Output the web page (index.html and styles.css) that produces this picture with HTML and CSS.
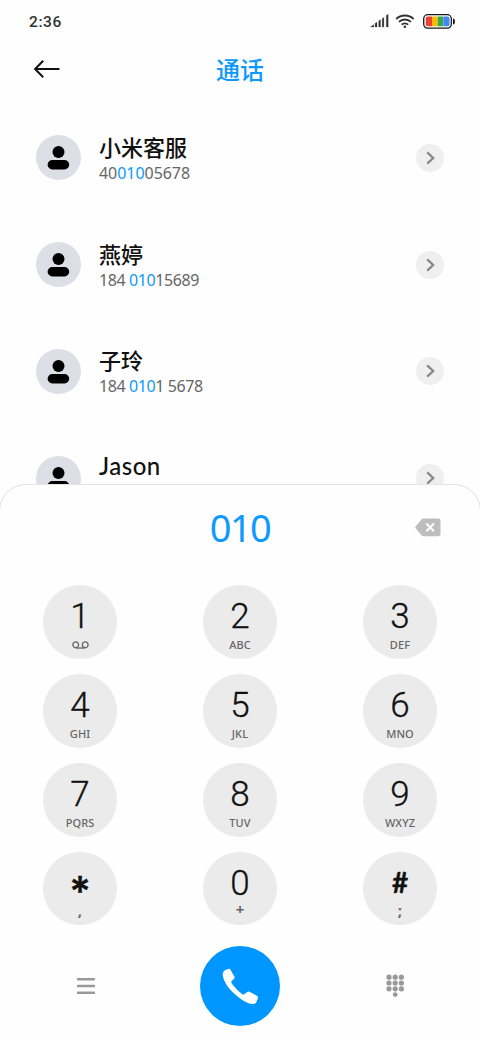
FILE: index.html
```html
<!DOCTYPE html>
<html lang="zh-CN">
<head>
<meta charset="utf-8">
<title>通话</title>
<link rel="stylesheet" href="styles.css">
</head>
<body>
<svg width="0" height="0" class="defs">
  <symbol id="person" viewBox="0 0 45 45"><circle cx="22.5" cy="17.1" r="6"/><rect x="11.6" y="25" width="21.6" height="9.4" rx="4.7"/></symbol>
  <symbol id="chevron" viewBox="0 0 28 28"><path d="M11.2 8.3 17.200 14l-6 5.700" fill="none" stroke="#888" stroke-width="2.3"/></symbol>
</svg>
<div class="phone">
  <div class="status">
    <span class="time">2:36</span>
    <svg class="signal" width="19" height="14" viewBox="0 0 19 14" fill="#303030" stroke="#303030" stroke-width=".2"><path d="M.5 13 3.8 10.5V13zM5.1 9.2 7 8.2V13H5.1zM8.7 6.8l1.8-1V13H8.7zM12.2 4.4l1.7-1V13h-1.7zM16.3 1.6 18.2.3V13h-1.9z"/></svg>
    <svg class="wifi" width="20" height="15" viewBox="0 0 20 15" fill="none" stroke="#303030" stroke-width="1.8"><path d="M1.200 5a12.600 12.600 0 0 1 17.400 0M3.900 7.900a8.700 8.700 0 0 1 12 0M6.600 10.700a4.900 4.900 0 0 1 6.600 0"/><circle cx="9.900" cy="12.700" r="1.300" fill="#303030" stroke="none"/></svg>
    <svg class="battery" width="33" height="15" viewBox="0 0 33 15"><rect x=".7" y=".7" width="27.6" height="13.4" rx="4" fill="#fff" stroke="#171717" stroke-width="1.3"/><path d="M9 2.5v9.8H4.7a2 2 0 0 1-2-2V4.500a2 2 0 0 1 2-2z" fill="#ea4335"/><path d="M9 2.500h5.800v9.800H9z" fill="#fbbc05"/><path d="M14.800 2.500h5.700v9.800h-5.700z" fill="#34a853"/><path d="M20.500 2.500h4a2 2 0 0 1 2 2v5.800a2 2 0 0 1-2 2h-4z" fill="#4285f4"/><path d="M30 4.300q2 .6 2 3.100t-2 3.100z" fill="#171717"/></svg>
  </div>
  <header class="header">
    <svg width="28" height="20" viewBox="0 0 28 20" fill="none" stroke="#111" stroke-width="2"><path d="M10.200 1.800 2.100 10l8.100 8.200M2.100 10H26.500"/></svg>
    <h1>通话</h1>
  </header>
  <main class="list">
    <div class="row"><svg class="avatar"><use href="#person"/></svg><div class="info"><div class="name">小米客服</div><div class="number">40<b>010</b>05678</div></div><svg class="more"><use href="#chevron"/></svg></div>
    <div class="row"><svg class="avatar"><use href="#person"/></svg><div class="info"><div class="name">燕婷</div><div class="number n2">184 <b>010</b>15689</div></div><svg class="more"><use href="#chevron"/></svg></div>
    <div class="row"><svg class="avatar"><use href="#person"/></svg><div class="info"><div class="name">子玲</div><div class="number n3">184 <b>010</b>1 5678</div></div><svg class="more"><use href="#chevron"/></svg></div>
    <div class="row"><svg class="avatar"><use href="#person"/></svg><div class="info"><div class="name latin">Jason</div><div class="number"></div></div><svg class="more"><use href="#chevron"/></svg></div>
  </main>
  <section class="sheet">
    <div class="entry">
      <span class="typed">010</span>
      <svg class="erase" width="26" height="19" viewBox="0 0 26 19"><path d="M8.200.500H23.500a2 2 0 0 1 2 2V16.300a2 2 0 0 1-2 2H8.200a2 2 0 0 1-1.500-.7L.600 10.200a1.200 1.200 0 0 1 0-1.600L6.700 1.200A2 2 0 0 1 8.200.500z" fill="#bdbdbd"/><path d="M11.300 5.500l7.700 7.700M19 5.500l-7.700 7.700" stroke="#fff" stroke-width="2"/></svg>
    </div>
    <div class="keys">
      <div class="key"><span class="digit">1</span><span class="sub"><svg class="voicemail" width="17" height="8" viewBox="0 0 17 8" fill="none" stroke="#666" stroke-width="1.300"><circle cx="3.700" cy="3.800" r="2.900"/><circle cx="13.200" cy="3.800" r="2.900"/><path d="M3.700 7h9.500"/></svg></span></div>
      <div class="key"><span class="digit">2</span><span class="sub">ABC</span></div>
      <div class="key"><span class="digit">3</span><span class="sub">DEF</span></div>
      <div class="key"><span class="digit">4</span><span class="sub">GHI</span></div>
      <div class="key"><span class="digit">5</span><span class="sub">JKL</span></div>
      <div class="key"><span class="digit">6</span><span class="sub">MNO</span></div>
      <div class="key"><span class="digit">7</span><span class="sub">PQRS</span></div>
      <div class="key"><span class="digit">8</span><span class="sub">TUV</span></div>
      <div class="key"><span class="digit">9</span><span class="sub">WXYZ</span></div>
      <div class="key"><span class="digit star">*</span><span class="sub mark">,</span></div>
      <div class="key"><span class="digit">0</span><span class="sub mark plus">+</span></div>
      <div class="key"><span class="digit hash">#</span><span class="sub mark">;</span></div>
    </div>
    <div class="actions">
      <svg width="20" height="18" viewBox="0 0 20 18" stroke="#999" stroke-width="2.400" stroke-linecap="round"><path d="M2 2.200h16M2 9h16M2 15.700h16"/></svg>
      <div class="call"><svg width="80" height="80" viewBox="0 0 80 80"><path d="M25.400 24.100 28.300 22.900Q29.700 22.400 30.500 23.700L34.300 30.400Q35 31.700 34 32.700L31.200 35.400Q31.300 37 32.300 38.300Q37 44.500 42.300 48.200Q43.300 48.900 44.300 48.300L47.100 45.900Q48.200 45.100 49.500 45.800L57.200 50Q58.500 50.800 57.900 52.200L56.400 56.200Q55.400 58.100 52.400 58Q46.500 57.800 37.200 50.200Q27.800 42.500 24.200 34.400Q21.700 28.700 23.400 25.700Q24.100 24.600 25.400 24.100Z" fill="#fff"/></svg></div>
      <svg width="20" height="24" viewBox="0 0 20 24" fill="#999"><circle cx="4" cy="3.200" r="2.600"/><circle cx="10.200" cy="3.200" r="2.600"/><circle cx="16.400" cy="3.200" r="2.600"/><circle cx="4" cy="9" r="2.600"/><circle cx="10.200" cy="9" r="2.600"/><circle cx="16.400" cy="9" r="2.600"/><circle cx="4" cy="14.800" r="2.600"/><circle cx="10.200" cy="14.800" r="2.600"/><circle cx="16.400" cy="14.800" r="2.600"/><circle cx="10.200" cy="20.600" r="2.400"/></svg>
    </div>
  </section>
</div>
</body>
</html>
```
FILE: styles.css
```css
* { box-sizing: border-box; }
body { margin: 0; background: #fefefe; font-family: "Noto Sans", "Noto Sans CJK SC", sans-serif; color: #111; }
svg { display: block; flex: none; }
.defs { position: absolute; }
.phone { width: 480px; height: 1040px; overflow: hidden; display: flex; flex-direction: column; }
.status { height: 42px; display: flex; align-items: center; padding: 0 24px 0 29px; }
.time { flex: 1; padding-top: 1px; font: 500 15.5px/20px Roboto, sans-serif; letter-spacing: .6px; color: #333; }
.signal { margin-right: 6px; }
.wifi { margin-right: 8px; }
.header { height: 62.600px; display: grid; grid-template-columns: 60px 1fr 60px; padding: 0 33px; align-items: start; }
.header svg { margin-top: 17px; }
.header h1 { margin: 9px 0 0; text-align: center; font: 500 24px/36px "Noto Sans CJK SC", sans-serif; color: #0d99ff; }
.list { height: 379.400px; overflow: hidden; flex: none; }
.row { height: 106.700px; display: flex; align-items: center; padding: 0 36px 0 35.500px; }
.avatar { width: 45px; height: 45px; border-radius: 50%; background: #dcdfe5; fill: #000; }
.info { flex: 1; margin: -2px 0 0 18.500px; }
.name { font: 500 22px/30px "Noto Sans CJK SC", sans-serif; }
.latin { font: 500 24px/30px Lato, sans-serif; letter-spacing: .5px; }
.number { height: 22px; font-size: 16px; line-height: 24px; color: #666; letter-spacing: -.05px; }
.number b { font-weight: 400; color: #0d99ff; }
.n2, .n3 { letter-spacing: -.4px; }
.more { width: 28px; height: 28px; border-radius: 50%; background: #efefef; }
.sheet { flex: 1; border: 1px solid #e4e4e4; border-bottom: 0; border-radius: 27px 27px 0 0; background: #fefefe; margin: 0 -1px; }
.entry { height: 100.500px; display: grid; grid-template-columns: 65px 1fr 65px; align-items: start; }
.typed { grid-column: 2; margin-top: 17px; text-align: center; font-size: 38px; line-height: 50px; letter-spacing: -1.500px; color: #0d99ff; }
.erase { margin: 33px 0 0; }
.keys { display: grid; grid-template-columns: repeat(3, 73.500px); column-gap: 86.500px; row-gap: 15.300px; justify-content: center; }
.key { height: 73.500px; border-radius: 50%; background: #ebebeb; display: flex; flex-direction: column; align-items: center; }
.digit { height: 52px; padding-top: 11px; font: 300 35px/42px Roboto, sans-serif; -webkit-text-stroke: .3px #111; }
.sub { height: 15px; font: 500 11px/15px "Noto Sans", sans-serif; color: #666; letter-spacing: .1px; }
.voicemail { margin-top: 4px; }
.mark { font: 700 15px/13px "Noto Sans", sans-serif; }
.plus { line-height: 11px; }
.star { font: 600 41px/62px Inter, sans-serif; padding-top: 8px; }
.hash { font: 700 28px/38px Lato, sans-serif; }
.actions { display: flex; align-items: center; justify-content: space-between; padding: 20.500px 75.500px 0; }
.call { width: 80px; height: 80px; border-radius: 50%; background: #0096ff; }
```
